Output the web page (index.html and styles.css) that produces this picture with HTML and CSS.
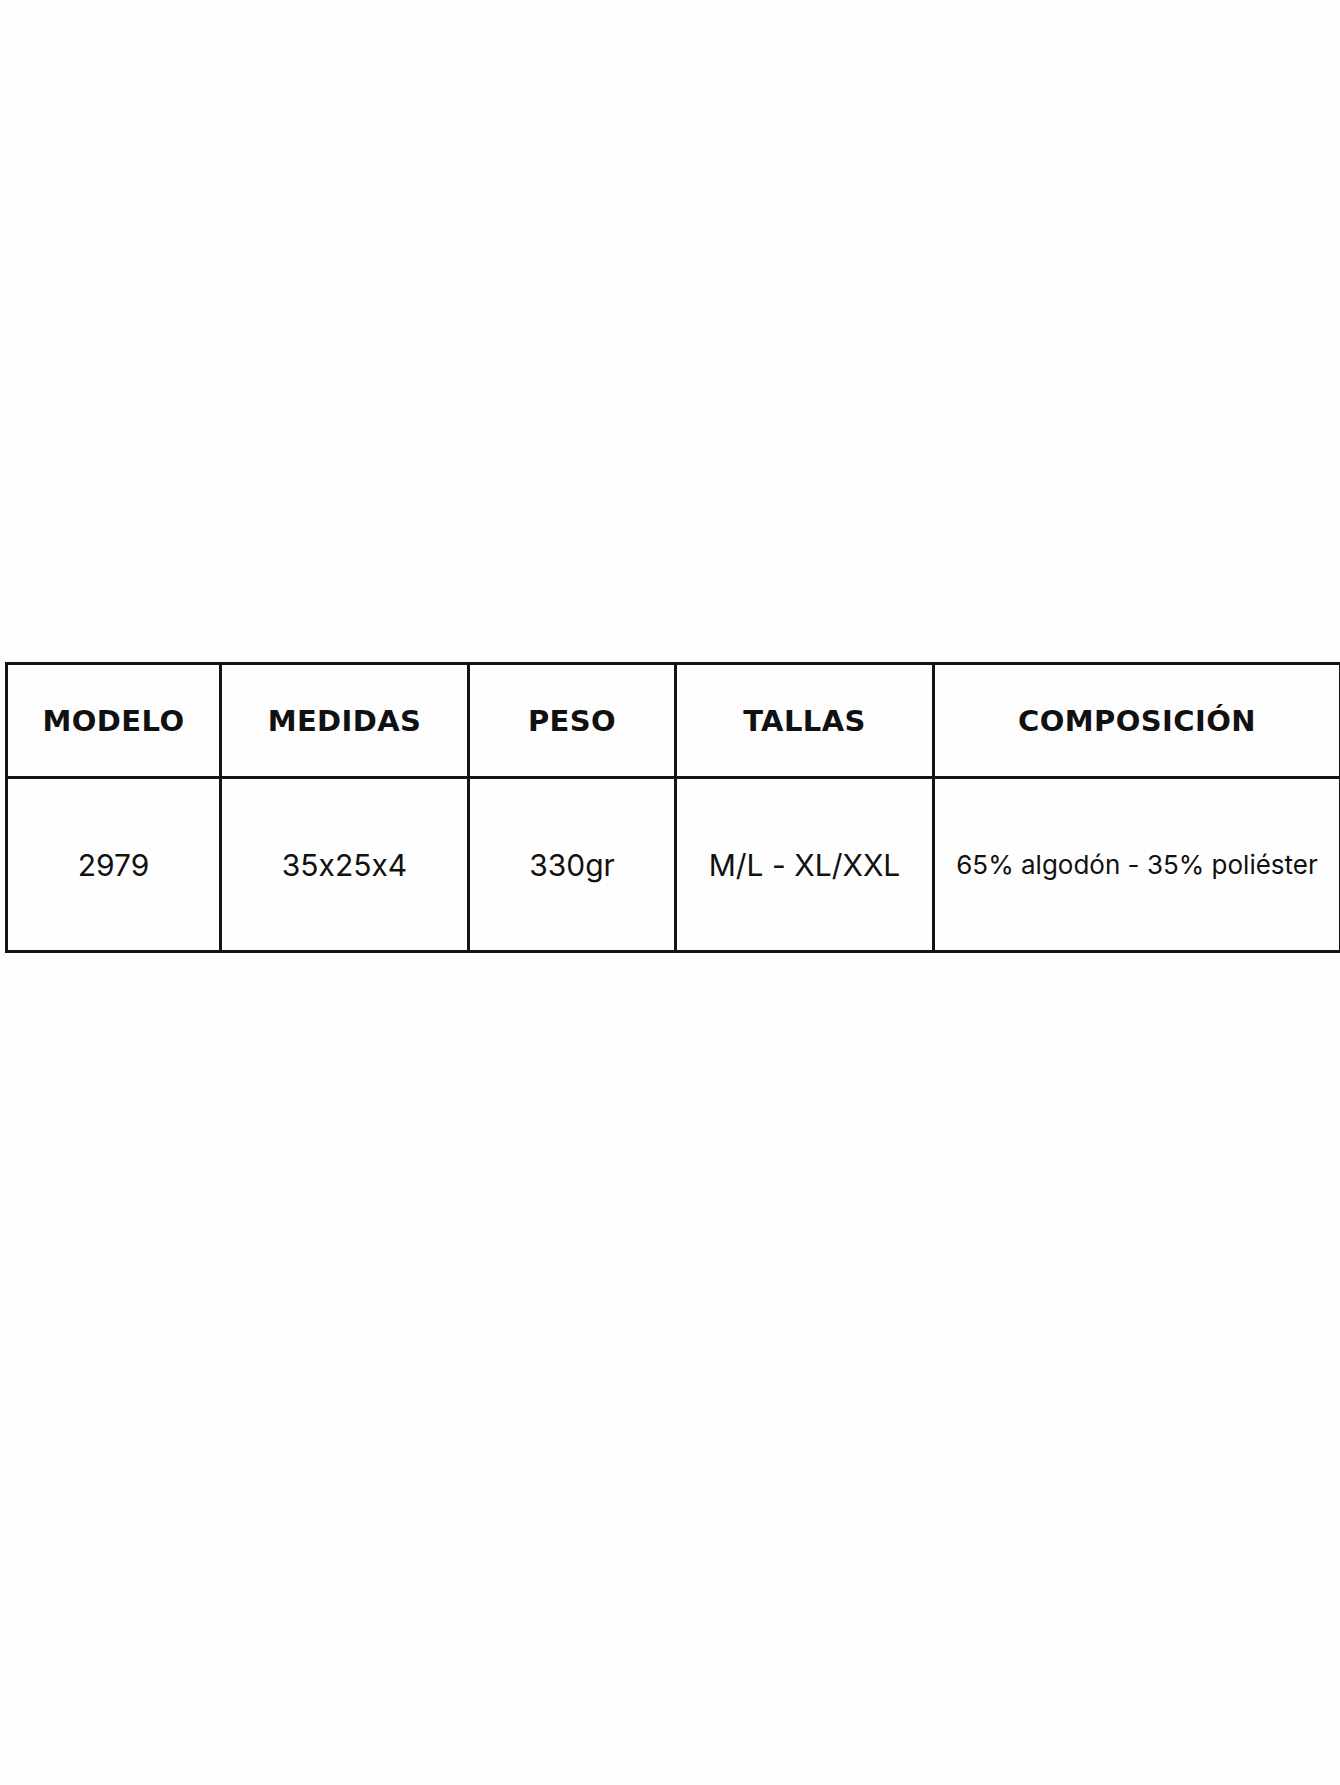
FILE: index.html
```html
<!DOCTYPE html>
<html lang="es">
<head>
<meta charset="utf-8">
<title>Ficha</title>
<link rel="stylesheet" href="styles.css">
</head>
<body>
<div class="page">
  <table class="spec">
    <colgroup>
      <col class="c1"><col class="c2"><col class="c3"><col class="c4"><col class="c5">
    </colgroup>
    <thead>
      <tr><th>MODELO</th><th>MEDIDAS</th><th>PESO</th><th>TALLAS</th><th>COMPOSICIÓN</th></tr>
    </thead>
    <tbody>
      <tr><td>2979</td><td>35x25x4</td><td>330gr</td><td>M/L - XL/XXL</td><td class="comp">65% algodón - 35% poliéster</td></tr>
    </tbody>
  </table>
</div>
</body>
</html>
```
FILE: styles.css
```css
html, body {
  margin: 0;
  padding: 0;
  background: #fefefe;
}
.page {
  width: 1340px;
  height: 1785px;
  padding-top: 662px;
  padding-left: 5px;
  box-sizing: border-box;
}
.spec {
  border-collapse: collapse;
  table-layout: fixed;
  width: 1334px;
  color: #111;
}
.c1 { width: 214px; }
.c2 { width: 248px; }
.c3 { width: 207px; }
.c4 { width: 258px; }
.c5 { width: 407px; }
.spec th, .spec td {
  border: 3px solid #141414;
  text-align: center;
  vertical-align: middle;
  padding: 0;
}
.spec th {
  height: 111px;
  font-family: "DejaVu Sans", sans-serif;
  font-weight: bold;
  font-size: 29px;
  letter-spacing: 0.4px;
}
.spec td {
  height: 171px;
  font-family: Inter, "Open Sans", sans-serif;
  font-size: 30px;
  font-weight: 400;
  font-feature-settings: "calt" 0;
}
.spec td.comp {
  font-size: 26px;
}
```
